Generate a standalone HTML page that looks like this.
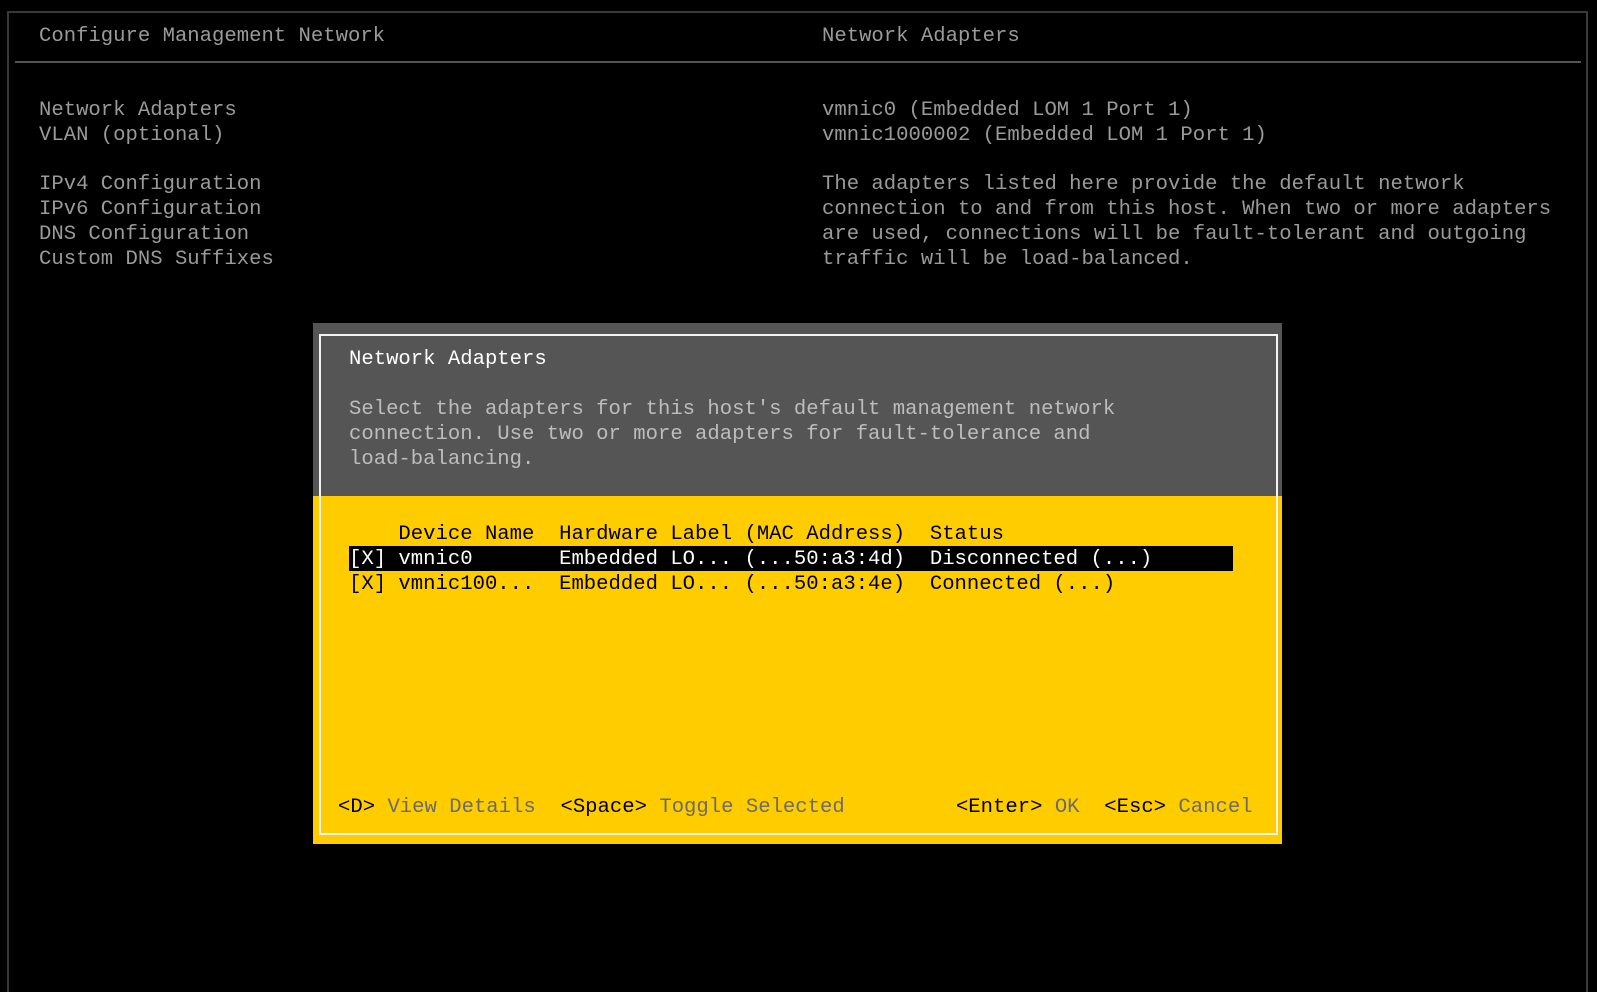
<!DOCTYPE html>
<html><head><style>
html,body{margin:0;padding:0;background:#000;width:1597px;height:992px;overflow:hidden}
body{position:relative;font-family:"Liberation Mono",monospace;font-size:20.6px;}
.t{position:absolute;white-space:pre;line-height:25px;height:25px}
.g{color:#9a9a9a}
</style></head><body>
<div style="position:absolute;left:7px;top:11px;width:1577px;height:1000px;border:2px solid #3a3a3a"></div>
<div style="position:absolute;left:15px;top:61px;width:1566px;height:2px;background:#555"></div>
<div class="t g" style="left:39px;top:24px">Configure Management Network</div>
<div class="t g" style="left:822px;top:24px">Network Adapters</div>
<div class="t g" style="left:39px;top:98px">Network Adapters
VLAN (optional)</div>
<div class="t g" style="left:39px;top:172px">IPv4 Configuration
IPv6 Configuration
DNS Configuration
Custom DNS Suffixes</div>
<div class="t g" style="left:822px;top:98px">vmnic0 (Embedded LOM 1 Port 1)
vmnic1000002 (Embedded LOM 1 Port 1)</div>
<div class="t g" style="left:822px;top:172px">The adapters listed here provide the default network
connection to and from this host. When two or more adapters
are used, connections will be fault-tolerant and outgoing
traffic will be load-balanced.</div>

<div style="position:absolute;left:313px;top:323px;width:969px;height:521px;background:#ffcc00"></div>
<div style="position:absolute;left:313px;top:323px;width:969px;height:173px;background:#555"></div>
<div style="position:absolute;left:319px;top:334px;width:955px;height:497px;border:2px solid #f2f2f2"></div>
<div class="t" style="left:349px;top:347px;color:#fff">Network Adapters</div>
<div class="t" style="left:349px;top:397px;color:#bdbdbd">Select the adapters for this host's default management network
connection. Use two or more adapters for fault-tolerance and
load-balancing.</div>
<div style="position:absolute;left:349px;top:546px;width:884px;height:25px;background:#000"></div>
<div class="t" style="left:349px;top:522px;color:#000">    Device Name  Hardware Label (MAC Address)  Status</div>
<div class="t" style="left:349px;top:547px;color:#fff">[X] vmnic0       Embedded LO... (...50:a3:4d)  Disconnected (...)</div>
<div class="t" style="left:349px;top:572px;color:#000">[X] vmnic100...  Embedded LO... (...50:a3:4e)  Connected (...)</div>
<div class="t" style="left:338px;top:795px;color:#000">&lt;D&gt; <span style="color:#6b6b6b">View Details</span>  &lt;Space&gt; <span style="color:#6b6b6b">Toggle Selected</span>         &lt;Enter&gt; <span style="color:#6b6b6b">OK</span>  &lt;Esc&gt; <span style="color:#6b6b6b">Cancel</span></div>
</body></html>
